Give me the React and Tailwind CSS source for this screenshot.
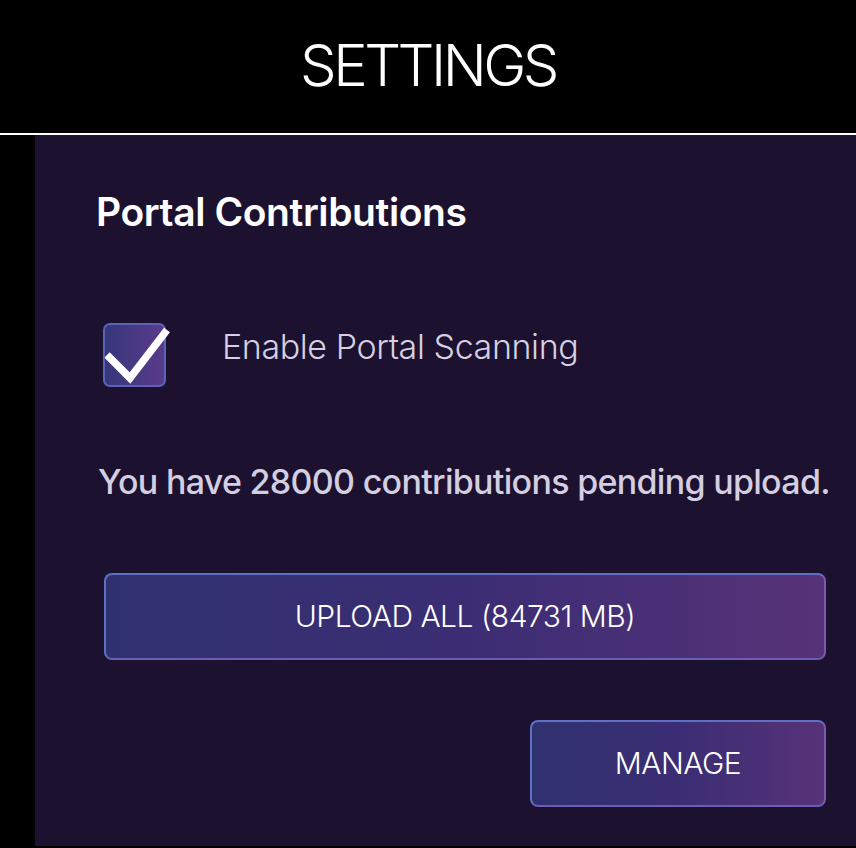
import React, { useState } from 'react';

const Checkbox = ({ checked, onChange }) => (
  <button
    onClick={() => onChange(!checked)}
    className="relative w-[63px] h-[64px] rounded-[7px] border-2 border-[#5b63b8] bg-gradient-to-r from-[#36377a] to-[#5a3a8c]"
  >
    {checked && (
      <svg
        className="absolute left-[0px] top-[0px]"
        width="68"
        height="62"
        viewBox="0 0 68 62"
        fill="none"
      >
        <path d="M2 30 L25 53 L62 5" stroke="white" strokeWidth="7.5" strokeLinejoin="miter" />
      </svg>
    )}
  </button>
);

const GlowButton = ({ children, className }) => (
  <button
    className={`rounded-[8px] border-2 border-[#5f6fc4] bg-gradient-to-r from-[#2f316f] via-[#3b2d74] to-[#573278] text-white text-[30px] font-light tracking-[-0.5px] ${className}`}
    style={{ borderRightColor: '#7a5aae', borderBottomColor: '#6b5cb4' }}
  >
    {children}
  </button>
);

export default function App() {
  const [scanning, setScanning] = useState(true);

  return (
    <div className="w-[856px] h-[848px] bg-black overflow-hidden" style={{ fontFamily: 'Inter, "Noto Sans", sans-serif' }}>
      <div className="h-[135px] flex items-center justify-center border-b-2 border-white">
        <h1 className="text-white text-[58px] font-light tracking-[-3.5px] leading-none pb-[4px]">SETTINGS</h1>
      </div>
      <div className="flex h-[711px]">
        <div className="w-[35px] shrink-0" />
        <div className="flex-1 bg-[#1c1230] pl-[61px] pr-[20px] pt-[53px]">
          <h2 className="text-white text-[39px] font-semibold tracking-[-0.4px] leading-tight">Portal Contributions</h2>

          <div className="flex items-center mt-[84px] ml-[7px]">
            <Checkbox checked={scanning} onChange={setScanning} />
            <span className="ml-[56px] text-[#d6d0e2] text-[34px] font-light tracking-[-0.4px] pb-[17px]">
              Enable Portal Scanning
            </span>
          </div>

          <p className="mt-[67px] ml-[2px] text-[#d4cfe0] text-[34px] font-medium tracking-[-0.7px] whitespace-nowrap">
            You have 28000 contributions pending upload.
          </p>

          <GlowButton className="mt-[66px] ml-[8px] w-[722px] h-[87px] block">
            UPLOAD ALL (84731 MB)
          </GlowButton>

          <div className="flex justify-end mt-[60px] pr-[10px]">
            <GlowButton className="w-[296px] h-[87px]">MANAGE</GlowButton>
          </div>
        </div>
      </div>
    </div>
  );
}
